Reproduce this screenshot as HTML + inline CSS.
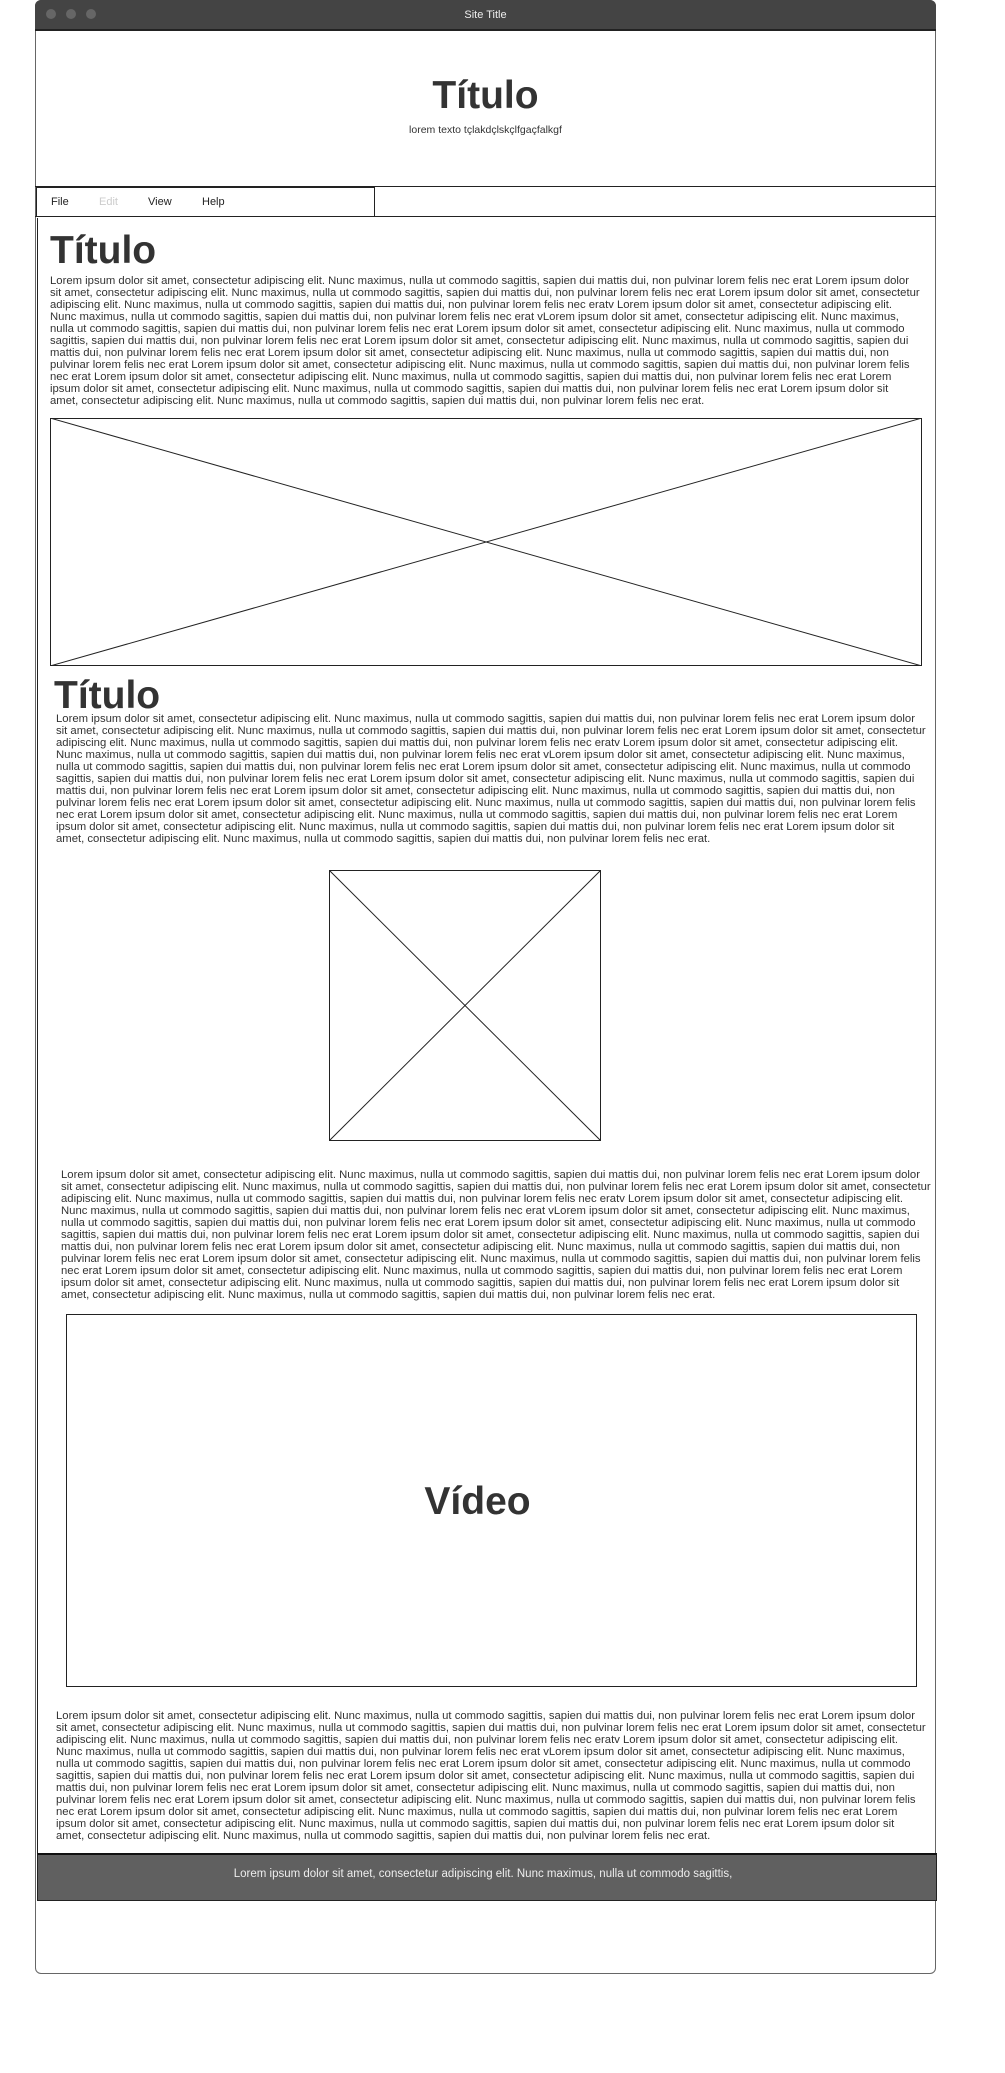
<!DOCTYPE html>
<html><head><meta charset="utf-8"><style>
*{margin:0;padding:0;box-sizing:border-box}
body{width:1005px;height:2073px;background:#fff;position:relative;font-family:"Liberation Sans",sans-serif;color:#333;overflow:hidden}
.a{position:absolute}
.win{left:35px;top:0;width:901px;height:1974px;border:1px solid #666;border-radius:6px;overflow:hidden}
.tb{left:35px;top:0;width:901px;height:31px;background:#444;border-radius:6px 6px 0 0;border-bottom:2px solid #222}
.dot{width:10px;height:10px;border-radius:50%;background:#666;top:9px}
.p{font-size:11.3px;line-height:12px;white-space:nowrap;color:#333}
h1{position:absolute;font-size:39px;font-weight:bold;color:#333;line-height:1}
.m{font-size:11px;top:196px}
</style></head><body>
<div class="a win"></div>
<div class="a tb"></div>
<div class="a dot" style="left:46px"></div>
<div class="a dot" style="left:66px"></div>
<div class="a dot" style="left:86px"></div>
<div class="a" style="left:35px;width:901px;top:9px;text-align:center;color:#eee;font-size:11px">Site Title</div>
<h1 style="left:35px;width:901px;text-align:center;top:76px">Título</h1>
<div class="a" style="left:35px;width:901px;text-align:center;top:124px;font-size:10.5px">lorem texto tçlakdçlskçlfgaçfalkgf</div>
<div class="a" style="left:35px;top:186px;width:901px;border-top:1px solid #222"></div>
<div class="a" style="left:36px;top:186px;width:339px;height:31px;border:1px solid #222;border-top-width:2px"></div>
<div class="a" style="left:35px;top:216px;width:901px;border-top:1px solid #222"></div>
<div class="a m" style="left:51px;color:#222">File</div>
<div class="a m" style="left:99px;color:#ccc">Edit</div>
<div class="a m" style="left:148px;color:#222">View</div>
<div class="a m" style="left:202px;color:#222">Help</div>
<div class="a" style="left:37px;top:218px;width:899px;height:1636px;border-left:1px solid #222"></div>
<h1 style="left:50px;top:231px">Título</h1>
<div class="a p" id="p1" style="left:50px;top:275px"></div>
<svg class="a" style="left:50px;top:418px" width="872" height="248"><rect x="0.5" y="0.5" width="871" height="247" fill="none" stroke="#222"/><line x1="0" y1="0" x2="872" y2="248" stroke="#222"/><line x1="872" y1="0" x2="0" y2="248" stroke="#222"/></svg>
<h1 style="left:54px;top:676px">Título</h1>
<div class="a p" id="p2" style="left:56px;top:713px"></div>
<svg class="a" style="left:329px;top:870px" width="272" height="271"><rect x="0.5" y="0.5" width="271" height="270" fill="none" stroke="#222"/><line x1="0" y1="0" x2="272" y2="271" stroke="#222"/><line x1="272" y1="0" x2="0" y2="271" stroke="#222"/></svg>
<div class="a p" id="p3" style="left:61px;top:1169px"></div>
<div class="a" style="left:66px;top:1314px;width:851px;height:373px;border:1px solid #222"></div>
<h1 style="left:52px;width:851px;text-align:center;top:1482px">Vídeo</h1>
<div class="a p" id="p4" style="left:56px;top:1710px"></div>
<div class="a" style="left:37px;top:1853px;width:900px;height:48px;background:#606060;border-top:2px solid #111;border-bottom:1px solid #222;border-left:1px solid #222;border-right:1px solid #222"></div>
<div class="a" style="left:33px;width:900px;top:1868px;text-align:center;color:#eee;font-size:11.5px">Lorem ipsum dolor sit amet, consectetur adipiscing elit. Nunc maximus, nulla ut commodo sagittis,</div>
<script>
var L=["Lorem ipsum dolor sit amet, consectetur adipiscing elit. Nunc maximus, nulla ut commodo sagittis, sapien dui mattis dui, non pulvinar lorem felis nec erat Lorem ipsum dolor",
"sit amet, consectetur adipiscing elit. Nunc maximus, nulla ut commodo sagittis, sapien dui mattis dui, non pulvinar lorem felis nec erat Lorem ipsum dolor sit amet, consectetur",
"adipiscing elit. Nunc maximus, nulla ut commodo sagittis, sapien dui mattis dui, non pulvinar lorem felis nec eratv Lorem ipsum dolor sit amet, consectetur adipiscing elit.",
"Nunc maximus, nulla ut commodo sagittis, sapien dui mattis dui, non pulvinar lorem felis nec erat vLorem ipsum dolor sit amet, consectetur adipiscing elit. Nunc maximus,",
"nulla ut commodo sagittis, sapien dui mattis dui, non pulvinar lorem felis nec erat Lorem ipsum dolor sit amet, consectetur adipiscing elit. Nunc maximus, nulla ut commodo",
"sagittis, sapien dui mattis dui, non pulvinar lorem felis nec erat Lorem ipsum dolor sit amet, consectetur adipiscing elit. Nunc maximus, nulla ut commodo sagittis, sapien dui",
"mattis dui, non pulvinar lorem felis nec erat Lorem ipsum dolor sit amet, consectetur adipiscing elit. Nunc maximus, nulla ut commodo sagittis, sapien dui mattis dui, non",
"pulvinar lorem felis nec erat Lorem ipsum dolor sit amet, consectetur adipiscing elit. Nunc maximus, nulla ut commodo sagittis, sapien dui mattis dui, non pulvinar lorem felis",
"nec erat Lorem ipsum dolor sit amet, consectetur adipiscing elit. Nunc maximus, nulla ut commodo sagittis, sapien dui mattis dui, non pulvinar lorem felis nec erat Lorem",
"ipsum dolor sit amet, consectetur adipiscing elit. Nunc maximus, nulla ut commodo sagittis, sapien dui mattis dui, non pulvinar lorem felis nec erat Lorem ipsum dolor sit",
"amet, consectetur adipiscing elit. Nunc maximus, nulla ut commodo sagittis, sapien dui mattis dui, non pulvinar lorem felis nec erat."];
["p1","p2","p3","p4"].forEach(function(i){document.getElementById(i).innerHTML=L.join("<br>");});
</script>
</body></html>
